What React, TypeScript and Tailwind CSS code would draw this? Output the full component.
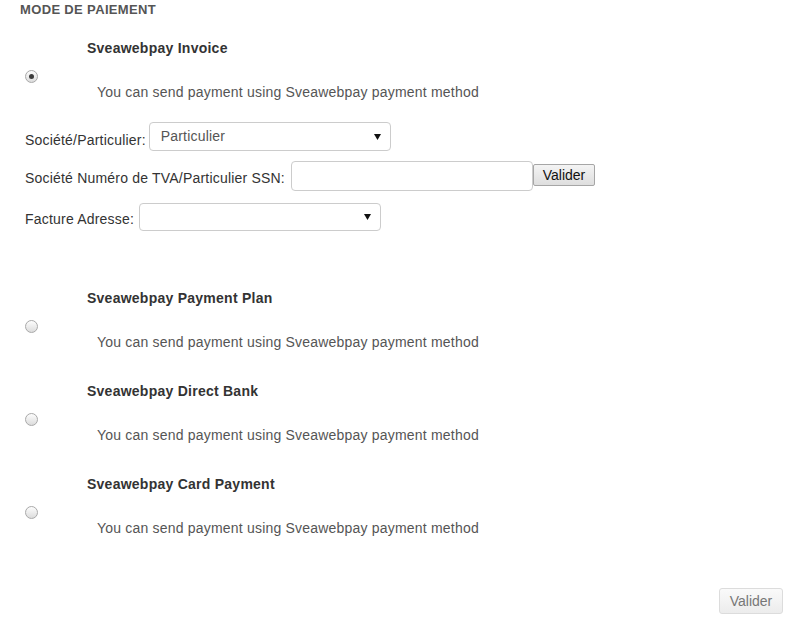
import React from 'react';

const methods = [
  { title: 'Sveawebpay Payment Plan' },
  { title: 'Sveawebpay Direct Bank' },
  { title: 'Sveawebpay Card Payment' },
];

function Radio({ checked }: { checked?: boolean }) {
  return (
    <div className="w-[13px] h-[13px] rounded-full border border-[#a9a9a9] bg-gradient-to-b from-[#fdfdfd] to-[#dcdcdc] flex items-center justify-center">
      {checked && <div className="w-[5px] h-[5px] rounded-full bg-[#3c3c3c]" />}
    </div>
  );
}

function Arrow() {
  return (
    <svg width="7" height="6" viewBox="0 0 7 6" className="absolute right-[9px] top-1/2 -translate-y-1/2">
      <path d="M0 0 H7 L3.5 6 Z" fill="#111" />
    </svg>
  );
}

function Method({ title, checked, children }: { title: string; checked?: boolean; children?: React.ReactNode }) {
  return (
    <div>
      <div className="flex">
        <div className="w-[67px] pl-[5px] pt-[32px] shrink-0">
          <Radio checked={checked} />
        </div>
        <div>
          <div className="text-[14px] leading-[20px] font-bold text-[#333] tracking-[0.25px]">{title}</div>
          <div className="mt-[24px] pl-[10px] text-[14px] leading-[20px] text-[#555] tracking-[0.2px]">
            You can send payment using Sveawebpay payment method
          </div>
        </div>
      </div>
      {children}
    </div>
  );
}

export default function App() {
  return (
    <div className="w-[798px] h-[625px] bg-white pl-[20px] pr-[15px] font-['Liberation_Sans',Arial,sans-serif] text-[14px] text-[#333]">
      <div className="h-[20px] leading-[20px] text-[13px] font-bold text-[#555] tracking-[0.35px]">MODE DE PAIEMENT</div>

      {/* Invoice with its form */}
      <div className="pt-[18px]">
        <Method title="Sveawebpay Invoice" checked>
          <div className="mt-[20px] pl-[5px] text-[#333] tracking-[0.2px]">
            <div className="flex items-end gap-[3px] mb-[10px]">
              <span className="leading-[20px] pb-[1px]">Société/Particulier:</span>
              <div className="relative w-[242px] h-[29px] border border-[#ccc] rounded-[4px] bg-white flex items-center pl-[11px] text-[#555]">
                Particulier
                <Arrow />
              </div>
            </div>
            <div className="flex items-end gap-[6px] mb-[12px]">
              <span className="leading-[20px] pb-[3px]">Société Numéro de TVA/Particulier SSN:</span>
              <div className="w-[242px] h-[30px] border border-[#ccc] rounded-[4px] bg-white" />
              <button className="-ml-[6px] mb-[5px] w-[62px] h-[22px] border border-[#a6a6a6] rounded-[2px] bg-gradient-to-b from-[#f4f4f4] to-[#dedede] text-[14px] text-[#111] tracking-normal">
                Valider
              </button>
            </div>
            <div className="flex items-end gap-[5px]">
              <span className="leading-[20px] pb-[2px]">Facture Adresse:</span>
              <div className="relative w-[242px] h-[28px] border border-[#ccc] rounded-[4px] bg-white">
                <Arrow />
              </div>
            </div>
          </div>
        </Method>
      </div>

      {/* Other methods */}
      <div className="pt-[57px] flex flex-col gap-[29px]">
        {methods.map((m) => (
          <Method key={m.title} title={m.title} />
        ))}
      </div>

      <div className="mt-[50px] flex justify-end">
        <button className="w-[64px] h-[26px] border border-[#dcdcdc] rounded-[3px] bg-gradient-to-b from-[#fafafa] to-[#ececec] text-[14px] text-[#777]">
          Valider
        </button>
      </div>
    </div>
  );
}
